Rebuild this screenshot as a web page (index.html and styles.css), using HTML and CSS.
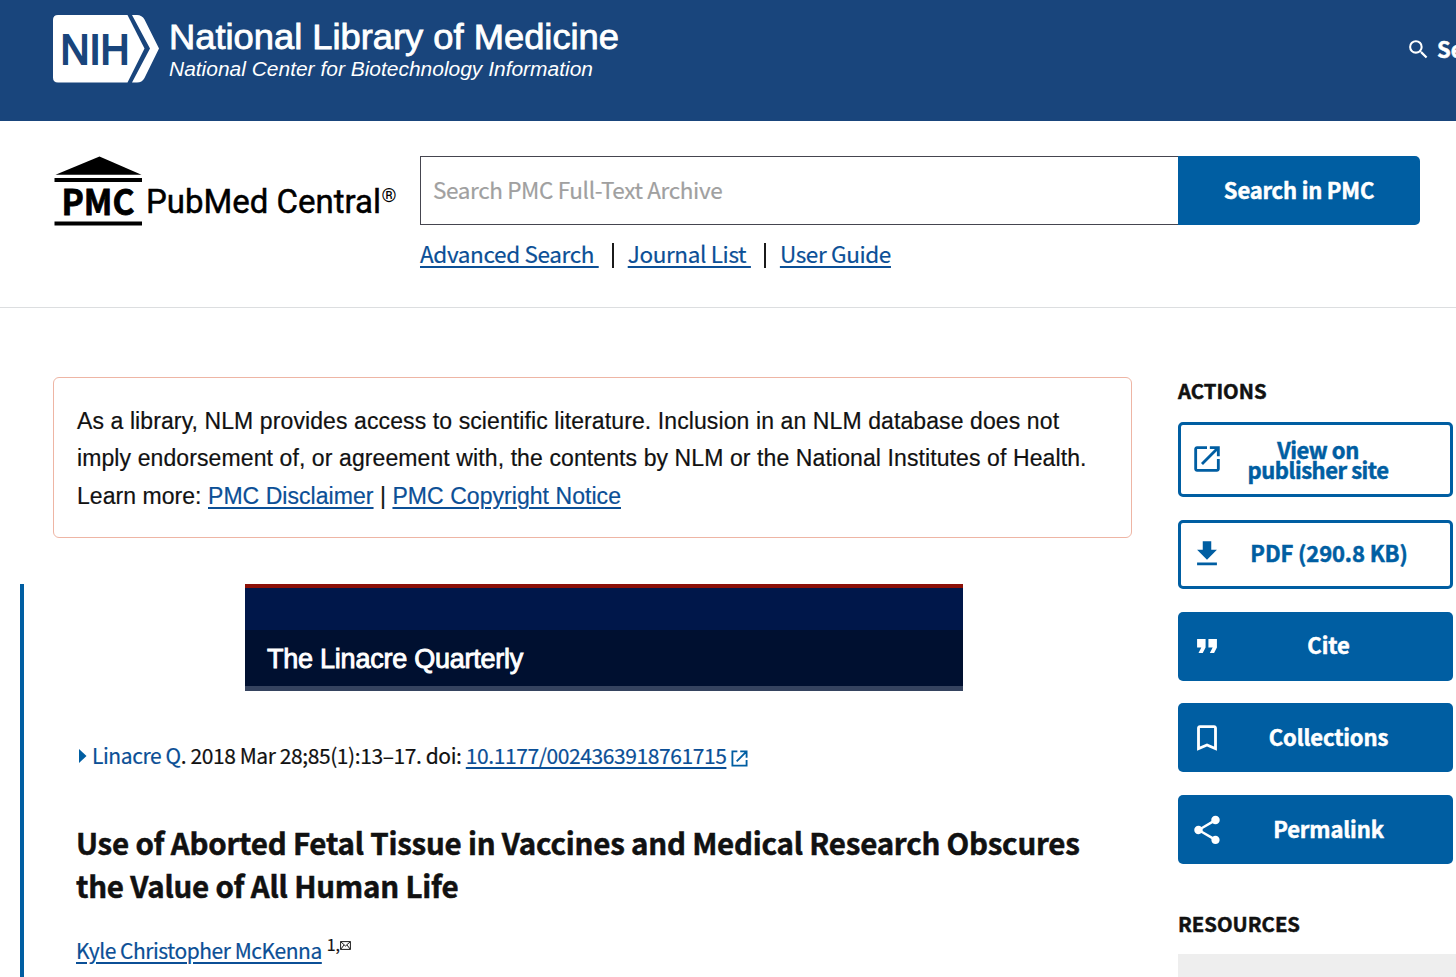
FILE: index.html
```html
<!DOCTYPE html>
<html lang="en">
<head>
    <meta charset="UTF-8">
    <meta name="viewport" content="width=device-width, initial-scale=1.0">
    <title>Use of Aborted Fetal Tissue in Vaccines and Medical Research - PMC</title>
    <link rel="stylesheet" href="styles.css">
</head>
<body>

    <!-- NCBI Header -->
    <header class="ncbi-header">
        <a class="ncbi-logo" href="#">
            <svg width="580" height="80" viewBox="0 0 580 80">
                <path fill="#fff" d="M5 0H74.500L91.500 33.500L74.500 67.500H5Q0 67.500 0 62.500V5Q0 0 5 0Z"/>
                <path fill="#fff" d="M79 0H84Q89 0 91.500 4.500L106 33.500L91.500 63Q89 67.500 84 67.500H79L97 33.500Z"/>
                <text class="logo-nih" x="7.500" y="48.500" textLength="69" lengthAdjust="spacingAndGlyphs">NIH</text>
                <text class="logo-nlm" x="116" y="33.500" textLength="450" lengthAdjust="spacingAndGlyphs">National Library of Medicine</text>
                <text class="logo-ncbi" x="116" y="60.500" textLength="424" lengthAdjust="spacingAndGlyphs">National Center for Biotechnology Information</text>
            </svg>
        </a>
        <a class="header-search" href="#">
            <svg width="25" height="25" viewBox="0 0 24 24" fill="#fff"><path d="M15.500 14h-.79l-.28-.27A6.471 6.471 0 0 0 16 9.500 6.500 6.500 0 1 0 9.500 16c1.610 0 3.090-.59 4.230-1.570l.27.28v.79l5 4.990L20.490 19l-4.990-5zm-6 0C7.010 14 5 11.990 5 9.500S7.010 5 9.500 5 14 7.010 14 9.500 11.990 14 9.500 14z"/></svg>
            <span>Search</span>
        </a>
    </header>

    <!-- PMC Search Section -->
    <div class="pmc-header">
        <a class="pmc-logo" href="#">
            <svg width="345" height="72" viewBox="0 0 345 72">
                <path d="M2.500 18.800L46.500 .5L88.500 18.800Z"/>
                <path d="M1.500 22H89V26H1.500ZM1.500 65.500H89V69.500H1.500Z"/>
                <text class="logo-pmc" x="8.500" y="59" textLength="73" lengthAdjust="spacingAndGlyphs">PMC</text>
                <text class="logo-name" x="93" y="57" textLength="235" lengthAdjust="spacingAndGlyphs">PubMed Central</text>
                <text class="logo-reg" x="328.500" y="46" textLength="15" lengthAdjust="spacingAndGlyphs">®</text>
            </svg>
        </a>
        <div class="search-area">
            <form class="search-form">
                <input type="text" placeholder="Search PMC Full-Text Archive">
                <button type="button">Search in PMC</button>
            </form>
            <div class="search-links">
                <a href="#">Advanced Search&nbsp;</a>
                <span class="bar"></span>
                <a href="#">Journal List&nbsp;</a>
                <span class="bar"></span>
                <a href="#">User Guide</a>
            </div>
        </div>
    </div>

    <div class="page">
        <main class="main">
            <!-- Disclaimer -->
            <div class="disclaimer">
                As a library, NLM provides access to scientific literature. Inclusion in an NLM database does not<br>
                imply endorsement of, or agreement with, the contents by NLM or the National Institutes of Health.<br>
                <span class="learn-more">Learn more: <a href="#">PMC Disclaimer</a> | <a href="#">PMC Copyright Notice</a></span>
            </div>

            <!-- Article -->
            <article class="article">
                <div class="journal-banner"><span>The Linacre Quarterly</span></div>
                <div class="citation">
                    <svg class="arrow" width="8" height="14" viewBox="0 0 8 14"><path d="M0 0L7.500 7L0 14Z"/></svg>
                    <span><a class="journal" href="#">Linacre Q</a>. 2018 Mar 28;85(1):13–17. doi: <a href="#">10.1177/0024363918761715</a></span>
                    <svg class="external" width="17" height="17" viewBox="0 0 24 24"><path d="M9 2H2V22H22V14M13 2H22V11M22 2L8 16"/></svg>
                </div>
                <h1>Use of Aborted Fetal Tissue in Vaccines and Medical Research Obscures<br>the Value of All Human Life</h1>
                <div class="author">
                    <a href="#">Kyle Christopher McKenna</a>
                    <span class="affil">1,</span>
                    <svg width="11" height="9" viewBox="0 0 11 9"><path d="M.6.6H10.400V8.400H.6ZM.6.6L5.500 5L10.400.6M.6 8.400L4 4M10.400 8.400L7 4"/></svg>
                </div>
            </article>
        </main>

        <!-- Sidebar -->
        <aside class="sidebar">
            <h2>ACTIONS</h2>
            <a class="btn outline tall" href="#">
                <svg width="34" height="34" viewBox="0 0 24 24"><path d="M19 19H5V5h7V3H5c-1.110 0-2 .9-2 2v14c0 1.100.89 2 2 2h14c1.100 0 2-.9 2-2v-7h-2v7zM14 3v2h3.590l-9.830 9.830 1.410 1.410L19 6.410V10h2V3h-7z"/></svg>
                <span>View on<br>publisher site</span>
            </a>
            <a class="btn outline" href="#">
                <svg width="34" height="34" viewBox="0 0 24 24"><path d="M19 9h-4V3H9v6H5l7 7 7-7zM5 18v2h14v-2H5z"/></svg>
                <span>PDF (290.8 KB)</span>
            </a>
            <a class="btn" href="#">
                <svg width="34" height="34" viewBox="0 0 24 24"><path d="M6 17h3l2-4V7H5v6h3zm8 0h3l2-4V7h-6v6h3z"/></svg>
                <span>Cite</span>
            </a>
            <a class="btn" href="#">
                <svg width="34" height="34" viewBox="0 0 24 24"><path d="M17 3H7c-1.100 0-2 .9-2 2v16l7-3 7 3V5c0-1.100-.9-2-2-2zm0 15l-5-2.180L7 18V5h10v13z"/></svg>
                <span>Collections</span>
            </a>
            <a class="btn" href="#">
                <svg width="34" height="34" viewBox="0 0 24 24"><path d="M18 16.080c-.76 0-1.440.3-1.960.77L8.910 12.700c.05-.23.09-.46.09-.7s-.04-.47-.09-.7l7.050-4.110c.54.5 1.250.81 2.040.81 1.660 0 3-1.340 3-3s-1.340-3-3-3-3 1.340-3 3c0 .24.04.47.09.7L8.040 9.810C7.500 9.310 6.790 9 6 9c-1.660 0-3 1.340-3 3s1.340 3 3 3c.79 0 1.500-.31 2.040-.81l7.120 4.160c-.05.21-.08.43-.08.65 0 1.610 1.310 2.920 2.920 2.920s2.920-1.310 2.920-2.920-1.310-2.920-2.920-2.920z"/></svg>
                <span>Permalink</span>
            </a>
            <h2 class="resources">RESOURCES</h2>
            <div class="resource-box"></div>
        </aside>
    </div>

</body>
</html>
```
FILE: styles.css
```css
/* General Styles */
* {
    box-sizing: border-box;
}

body {
    margin: 0;
    height: 977px;
    overflow: hidden;
    background-color: #fff;
    color: #111;
    font-family: "Noto Sans CJK SC", "Open Sans", sans-serif;
}

a {
    color: #0b4f96;
    text-decoration-thickness: 2px;
    text-underline-offset: 3px;
}

svg {
    display: block;
    flex-shrink: 0;
}

/* NCBI Header */
.ncbi-header {
    display: flex;
    justify-content: space-between;
    align-items: flex-start;
    height: 121px;
    padding: 15px 0 0 53px;
    background-color: #19457c;
    overflow: hidden;
}

.logo-nih, .logo-nlm, .logo-ncbi {
    font-family: "Liberation Sans", sans-serif;
    fill: #fff;
}

.logo-nih {
    font-size: 42px;
    fill: #19457c;
    stroke: #19457c;
    stroke-width: 1.8px;
}

.logo-nlm {
    font-size: 34.5px;
    stroke: #fff;
    stroke-width: 0.8px;
}

.logo-ncbi {
    font-size: 20.5px;
    font-style: italic;
}

.header-search {
    display: flex;
    align-items: center;
    gap: 6px;
    width: 50px;
    margin-top: 16px;
    color: #fff;
    font-size: 22px;
    font-weight: 700;
    line-height: 34px;
    text-decoration: none;
    -webkit-text-stroke: 0.5px currentColor;
}

.header-search svg {
    margin-top: 2px;
}

/* PMC Search Section */
.pmc-header {
    display: flex;
    height: 187px;
    padding: 35px 36px 0 53px;
    border-bottom: 1px solid #dcdee0;
}

.pmc-logo {
    width: 367px;
}

.logo-pmc {
    font-size: 35px;
    font-weight: 700;
    stroke: #000;
    stroke-width: 0.8px;
}

.logo-name {
    font-family: Roboto, sans-serif;
    font-size: 34px;
    stroke: #000;
    stroke-width: 0.5px;
}

.logo-reg {
    font-family: Roboto, sans-serif;
    font-size: 19px;
}

.search-area {
    flex: 1;
}

.search-form {
    display: flex;
    height: 69px;
}

.search-form input {
    flex: 1;
    min-width: 0;
    padding: 0 12px 3px;
    border: 1px solid #45454f;
    border-right: 0;
    border-radius: 0;
    font-family: inherit;
    font-size: 22.5px;
    letter-spacing: -0.37px;
}

.search-form input::placeholder {
    color: #a0a0a0;
    -webkit-text-stroke: 0.2px currentColor;
}

.search-form button {
    width: 242px;
    padding-bottom: 4px;
    border: 0;
    border-radius: 0 5px 5px 0;
    background-color: #005ea2;
    color: #fff;
    font-family: inherit;
    font-size: 22px;
    font-weight: 700;
    letter-spacing: -0.2px;
    -webkit-text-stroke: 0.5px currentColor;
}

.search-links {
    display: flex;
    align-items: center;
    height: 34px;
    margin-top: 13px;
    font-size: 22.5px;
    letter-spacing: -0.36px;
    line-height: 34px;
    -webkit-text-stroke: 0.2px currentColor;
}

.search-links a {
    margin-top: -4px;
}

.bar {
    width: 2px;
    height: 25px;
    margin: 1px 14px 0 13px;
    background-color: #1b1b1b;
}

/* Page Layout */
.page {
    display: flex;
}

.main {
    width: 1132px;
    padding: 69px 0 0 20px;
}

.disclaimer {
    height: 161px;
    margin-left: 33px;
    padding: 25px 23px;
    border: 1px solid #eeb5a4;
    border-radius: 6px;
    font-family: "Liberation Sans", sans-serif;
    font-size: 23px;
    letter-spacing: 0.1px;
    line-height: 37.3px;
    white-space: nowrap;
    -webkit-text-stroke: 0.2px currentColor;
}

.learn-more {
    letter-spacing: 0.05px;
}

/* Article */
.article {
    height: 420px;
    margin-top: 46px;
    padding-left: 52px;
    border-left: 4px solid #005ea2;
}

.journal-banner {
    width: 718px;
    height: 107px;
    margin-left: 169px;
    padding: 56px 0 0 22px;
    border-top: 4px solid #8c1007;
    border-bottom: 5px solid #35435f;
    background: linear-gradient(#00174a 42px, #001030 42px);
    color: #fff;
    font-family: "Liberation Sans", sans-serif;
    font-size: 27px;
    letter-spacing: -0.24px;
    line-height: 31px;
    -webkit-text-stroke: 0.9px #fff;
}

.citation {
    display: flex;
    align-items: center;
    height: 34px;
    margin-top: 47px;
    padding-left: 3px;
    font-size: 21px;
    letter-spacing: -0.41px;
    line-height: 34px;
    white-space: nowrap;
    -webkit-text-stroke: 0.2px currentColor;
}

.arrow {
    margin: 2px 5px 0 0;
    fill: #005ea2;
}

.citation .journal {
    text-decoration: none;
}

.external {
    margin: 6px 0 0 5px;
    fill: none;
    stroke: #005ea2;
    stroke-width: 2.6px;
}

.article h1 {
    margin: 49px 0 0;
    font-size: 29.5px;
    font-weight: 700;
    letter-spacing: -0.22px;
    line-height: 43px;
    white-space: nowrap;
    -webkit-text-stroke: 0.5px currentColor;
}

.author {
    display: flex;
    height: 34px;
    margin-top: 26px;
    font-size: 21px;
    letter-spacing: -0.45px;
    line-height: 34px;
    -webkit-text-stroke: 0.2px currentColor;
}

.affil {
    margin-left: 5px;
    font-size: 16px;
    letter-spacing: -0.2px;
    line-height: 22px;
}

.author svg {
    margin-top: 8px;
    fill: none;
    stroke: #1b1b1b;
}

/* Sidebar */
.sidebar {
    width: 275px;
    margin-left: 46px;
    padding-top: 65px;
}

.sidebar h2 {
    margin: 0 0 15px;
    font-size: 20.3px;
    font-weight: 700;
    line-height: 34px;
    -webkit-text-stroke: 0.5px currentColor;
}

.btn {
    display: flex;
    align-items: center;
    height: 69px;
    margin-bottom: 22.8px;
    padding: 0 14px 0 12px;
    border-radius: 5px;
    background-color: #005ea2;
    color: #fff;
    fill: currentColor;
    font-size: 22px;
    font-weight: 700;
    letter-spacing: -0.12px;
    line-height: 20px;
    text-align: center;
    text-decoration: none;
    -webkit-text-stroke: 0.5px currentColor;
}

.btn svg {
    stroke: none;
}

.btn span {
    flex: 1;
    margin: -4px 0 0 -6px;
}

.btn.outline {
    padding: 0 10px 0 9px;
    border: 3px solid #005ea2;
    background-color: #fff;
    color: #005ea2;
}

.btn.tall {
    height: 75px;
    padding-right: 32px;
    padding-bottom: 1px;
    letter-spacing: -0.47px;
}

.btn.tall span {
    margin-top: -1px;
}

.sidebar .resources {
    margin: 42px 0 14px;
}

.resource-box {
    width: 278px;
    height: 40px;
    background-color: #eee;
}
```
